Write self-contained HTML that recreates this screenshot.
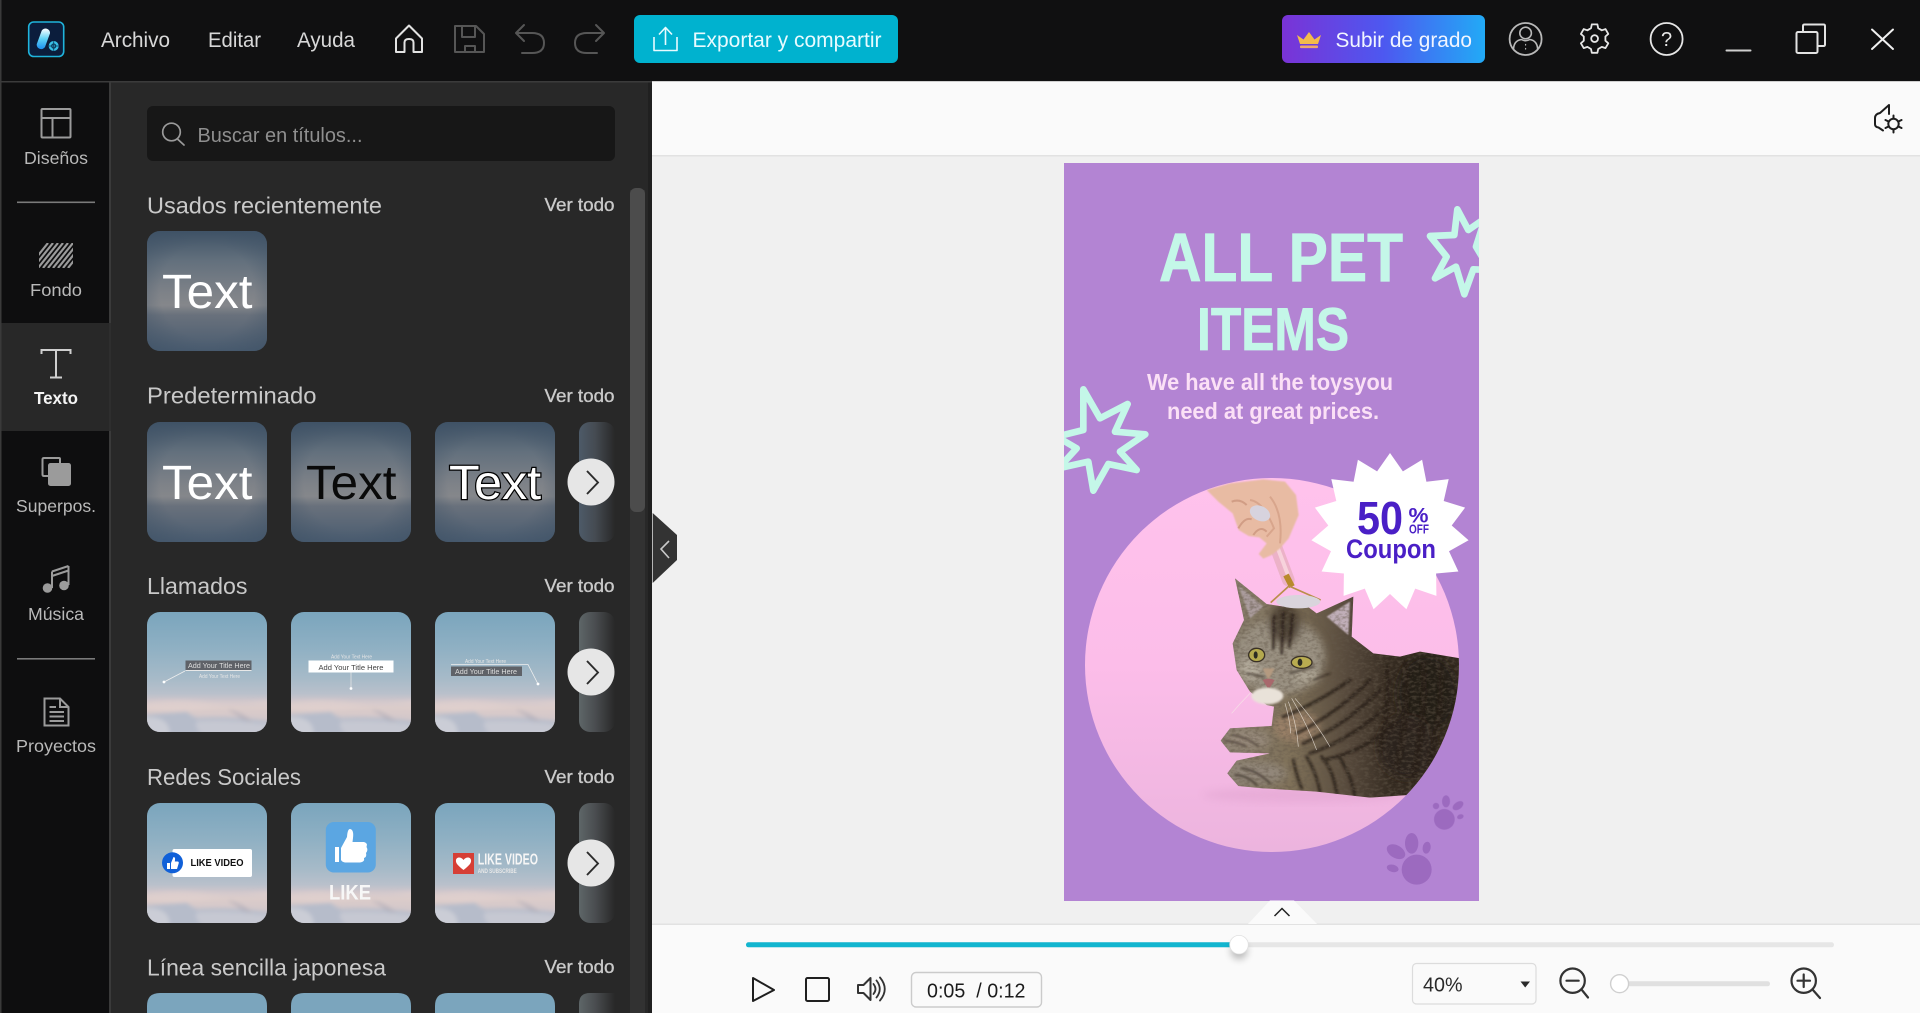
<!DOCTYPE html>
<html lang="es">
<head>
<meta charset="utf-8">
<title>Texto</title>
<style>
html,body{margin:0;padding:0;width:1920px;height:1013px;overflow:hidden;background:#f0f0f0}
svg{display:block}
text{font-family:"Liberation Sans",Arial,sans-serif}
</style>
</head>
<body>
<svg xmlns="http://www.w3.org/2000/svg" width="1920" height="1013" viewBox="0 0 1920 1013">
<defs>
  <linearGradient id="dk" x1="0" y1="0" x2="0" y2="1">
    <stop offset="0" stop-color="#3f5266"/><stop offset=".25" stop-color="#63707d"/><stop offset=".52" stop-color="#7e8288"/><stop offset=".62" stop-color="#85878b"/><stop offset=".7" stop-color="#69717c"/><stop offset="1" stop-color="#4a5c70"/>
  </linearGradient>
  <radialGradient id="vig" cx=".5" cy=".5" r=".72">
    <stop offset=".55" stop-color="#3f5266" stop-opacity="0"/><stop offset="1" stop-color="#3f5266" stop-opacity=".7"/>
  </radialGradient>
  <linearGradient id="sky" x1="0" y1="0" x2="0" y2="1">
    <stop offset="0" stop-color="#7aa5bd"/><stop offset=".3" stop-color="#8fb0c3"/><stop offset=".55" stop-color="#a6bac8"/><stop offset=".68" stop-color="#b9c0cb"/><stop offset=".74" stop-color="#cfc6cb"/><stop offset=".8" stop-color="#dbccca"/><stop offset=".9" stop-color="#d2c7ca"/><stop offset="1" stop-color="#bcc0cb"/>
  </linearGradient>
  <linearGradient id="fade" x1="0" y1="0" x2="1" y2="0">
    <stop offset="0" stop-color="#4d5a68"/><stop offset=".45" stop-color="#454b52"/><stop offset="1" stop-color="#282828"/>
  </linearGradient>
  <linearGradient id="fade2" x1="0" y1="0" x2="1" y2="0">
    <stop offset="0" stop-color="#5e6668"/><stop offset=".45" stop-color="#4a4d50"/><stop offset="1" stop-color="#282828"/>
  </linearGradient>
  <linearGradient id="up" x1="0" y1="0" x2="1" y2="0">
    <stop offset="0" stop-color="#7a33d6"/><stop offset=".5" stop-color="#4d58f0"/><stop offset="1" stop-color="#22aaf6"/>
  </linearGradient>
  <linearGradient id="pill" x1="0" y1="0" x2="0" y2="1">
    <stop offset="0" stop-color="#ffffff"/><stop offset=".5" stop-color="#5fd3f5"/><stop offset="1" stop-color="#1c8ff0"/>
  </linearGradient>
  <linearGradient id="pink" x1="0" y1="0" x2="0" y2="1">
    <stop offset="0" stop-color="#ffc2ec"/><stop offset=".5" stop-color="#fcbde9"/><stop offset="1" stop-color="#ecb4de"/>
  </linearGradient>
  <linearGradient id="catg" gradientUnits="userSpaceOnUse" x1="510" y1="0" x2="1225" y2="0">
    <stop offset="0" stop-color="#8a8071"/><stop offset=".3" stop-color="#7f7159"/><stop offset=".55" stop-color="#54473a"/><stop offset=".72" stop-color="#352b21"/><stop offset="1" stop-color="#332a20"/>
  </linearGradient>
  <clipPath id="poster"><rect x="1064" y="163" width="415" height="738"/></clipPath>
  <clipPath id="circ"><circle cx="666" cy="615" r="561"/></clipPath>
  <clipPath id="rr"><rect width="120" height="120" rx="13"/></clipPath>
  <clipPath id="catclip"><path d="M555 355 L650 432 L700 440 L760 430 L800 460 L910 410 L905 530 L970 580 L1050 590 L1110 575 L1230 595 L1230 700 L1190 850 L1140 950 L1075 1005 L960 1013 L800 995 L640 985 L565 978 L532 940 L560 902 L660 880 L540 877 L512 842 L540 805 L665 798 L672 740 L650 735 L600 695 L560 630 L548 550 L582 480Z"/></clipPath>
  <clipPath id="fondo"><rect x="39" y="243" width="34" height="25"/></clipPath>
  <filter id="b1" x="-10%" y="-10%" width="120%" height="120%"><feGaussianBlur stdDeviation="2"/></filter>
  <filter id="b15" x="-10%" y="-10%" width="120%" height="120%"><feGaussianBlur stdDeviation="3.5"/></filter>
  <filter id="b2" x="-30%" y="-30%" width="160%" height="160%"><feGaussianBlur stdDeviation="12"/></filter>
  <filter id="sh" x="-100%" y="-100%" width="300%" height="300%"><feGaussianBlur stdDeviation="4"/></filter>
  <filter id="fur" x="0" y="0" width="100%" height="100%">
    <feTurbulence type="fractalNoise" baseFrequency=".07 .13" numOctaves="3" seed="4"/>
    <feColorMatrix values="0 0 0 0 .13  0 0 0 0 .1  0 0 0 0 .07  0 0 0 3.2 -1.35"/>
  </filter>
  <symbol id="dkt" viewBox="0 0 120 120" width="120" height="120">
    <rect width="120" height="120" rx="13" fill="url(#dk)"/>
    <rect width="120" height="120" rx="13" fill="url(#vig)"/>
  </symbol>
  <symbol id="skyt" viewBox="0 0 120 120" width="120" height="120">
    <rect width="120" height="120" rx="13" fill="url(#sky)"/>
    <g clip-path="url(#rr)">
      <g filter="url(#b1)">
        <path d="M-5 103 L40 100 Q44 104 50 106 Q90 104 125 110 V125 H-5Z" fill="#b6bcca"/>
        <path d="M-5 105 Q14 104 20 112 Q24 118 22 125 H-5Z" fill="#cbcdd6"/>
        <path d="M50 109 Q85 107 125 113 V125 H60 Q46 118 50 109Z" fill="#c6c8d2"/>
        <path d="M80 97 Q95 100 106 110 L96 108 Q88 102 80 97Z" fill="#aca8b4" opacity=".6"/>
        <path d="M-5 92 Q25 86 55 90 T125 88 V94 Q90 91 60 96 T-5 96Z" fill="#e3d3d0" opacity=".55"/>
      </g>
    </g>
  </symbol>
</defs>

<!-- base -->
<rect width="1920" height="1013" fill="#f0f0f0"/>
<rect x="652" y="82" width="1268" height="73" fill="#fafafa"/>
<rect x="652" y="155" width="1268" height="1.5" fill="#e2e2e2"/>
<rect x="652" y="925" width="1268" height="88" fill="#fafafa"/>
<rect x="652" y="923.5" width="1268" height="1.5" fill="#e2e2e2"/>

<!-- header -->
<rect width="1920" height="81" fill="#101011"/>
<rect y="81" width="652" height="1.5" fill="#3b3b3b"/>
<rect y="81" x="652" width="1268" height="1" fill="#cfcfcf"/>
<rect x="0" y="0" width="1.5" height="1013" fill="#3a3a3a"/>

<!-- logo -->
<rect x="28.7" y="22" width="35" height="34.5" rx="5" fill="#0b1d3c" stroke="#1fb4dc" stroke-width="1.6"/>
<path d="M36.7 44.2 L41.7 30.6 A4.5 4.5 0 0 1 50 33.4 L45 47 A4.5 4.5 0 0 1 36.7 44.2Z" fill="url(#pill)"/>
<circle cx="53.7" cy="46" r="5" fill="#38bfe6"/>
<circle cx="53.7" cy="46" r="2" fill="none" stroke="#0b3a5c" stroke-width="1.2"/>
<path d="M49 46H58.4M53.7 41.3V50.7" stroke="#0b3a5c" stroke-width=".8"/>

<text x="101" y="47" font-size="21" fill="#d8d8d8" textLength="69" lengthAdjust="spacingAndGlyphs">Archivo</text>
<text x="208" y="47" font-size="21" fill="#d8d8d8" textLength="53" lengthAdjust="spacingAndGlyphs">Editar</text>
<text x="297" y="47" font-size="21" fill="#d8d8d8" textLength="58" lengthAdjust="spacingAndGlyphs">Ayuda</text>

<g fill="none" stroke-linejoin="round" stroke-linecap="round">
  <path d="M396 38.5 L409 25.5 L422 38.5 V52 H413.5 V42.5 Q413.5 39 409 39 Q404.5 39 404.5 42.5 V52 H396Z" stroke="#e2e2e2" stroke-width="2"/>
  <path d="M455 26 H476 L484 34 V52 H455Z M462 26 V37 H475 V26 M465 52 V46 H475 V52" stroke="#565656" stroke-width="2"/>
  <path d="M524 25 L516 33 L524 41 M516 33 H532 Q544 33 544 43 Q544 53 532 53 H522" stroke="#565656" stroke-width="2"/>
  <path d="M596 25 L604 33 L596 41 M604 33 H587 Q575 33 575 43 Q575 53 587 53 H597" stroke="#565656" stroke-width="2"/>
</g>

<!-- export -->
<rect x="634" y="15" width="264" height="48" rx="6" fill="#00b2cf"/>
<path d="M665.5 28 V45 M659 34.5 L665.5 27.5 L672 34.5 M654 37 V50.5 H677 V37" fill="none" stroke="#e8fbff" stroke-width="1.6" stroke-linejoin="round"/>
<text x="692.5" y="47" font-size="21" fill="#e8fbff" textLength="189" lengthAdjust="spacingAndGlyphs">Exportar y compartir</text>

<!-- upgrade -->
<rect x="1282" y="15" width="203" height="48" rx="6" fill="url(#up)"/>
<path d="M1297 35 L1303.5 39.5 L1309 32 L1314.5 39.5 L1321 35 L1318 44 H1300Z" fill="#f3bb4b"/>
<rect x="1300" y="45.5" width="18" height="2.6" rx="1" fill="#efa76d"/>
<text x="1335.5" y="47" font-size="21" fill="#f1f5ff" textLength="136.5" lengthAdjust="spacingAndGlyphs">Subir de grado</text>

<!-- right header icons -->
<g fill="none" stroke-linejoin="round" stroke-linecap="round">
  <circle cx="1525.6" cy="39" r="16" stroke="#b9b9b9" stroke-width="1.8"/>
  <circle cx="1525.6" cy="33" r="5.8" stroke="#b9b9b9" stroke-width="1.6"/>
  <path d="M1513.5 49 Q1514 40.5 1521.5 39.5 Q1525.6 42 1529.7 39.5 Q1537 40.5 1537.7 49" stroke="#b9b9b9" stroke-width="1.6"/>
  <path d="M1525.6 44.5v.5M1525.6 48.5v.5" stroke="#b9b9b9" stroke-width="1.2"/>
  <path transform="translate(1594.6 38.6)" d="M-3.6 -10.4 L-2.8 -14.2 H2.8 L3.6 -10.4 L7.2 -8.3 L10.9 -9.5 L13.7 -4.7 L10.8 -2.1 V2.1 L13.7 4.7 L10.9 9.5 L7.2 8.3 L3.6 10.4 L2.8 14.2 H-2.8 L-3.6 10.4 L-7.2 8.3 L-10.9 9.5 L-13.7 4.7 L-10.8 2.1 V-2.1 L-13.7 -4.7 L-10.9 -9.5 L-7.2 -8.3Z" stroke="#e6e6e6" stroke-width="1.8"/>
  <circle cx="1594.6" cy="38.6" r="3.4" stroke="#e6e6e6" stroke-width="1.8"/>
  <circle cx="1666.6" cy="39" r="16" stroke="#e6e6e6" stroke-width="1.8"/>
  <path d="M1726.5 50.5 H1750.5" stroke="#cfcfcf" stroke-width="2"/>
  <rect x="1796.5" y="32" width="21" height="21" rx="1.5" stroke="#e2e2e2" stroke-width="2"/>
  <path d="M1803 32 V26 Q1803 24.5 1804.5 24.5 H1823.5 Q1825 24.5 1825 26 V44.5 Q1825 46 1823.5 46 H1817.5" stroke="#e2e2e2" stroke-width="2"/>
  <path d="M1872 29.5 L1893 49 M1893 29.5 L1872 49" stroke="#f0f0f0" stroke-width="2"/>
</g>
<text x="1666.6" y="46" font-size="20" fill="#e6e6e6" text-anchor="middle">?</text>

<!-- right toolbar icon -->
<g fill="none" stroke="#1d1d1d" stroke-width="2" stroke-linejoin="round" stroke-linecap="round">
  <path d="M1889 105 L1880 113 Q1875 114 1875 118 V124 Q1875 127 1878.5 127.5 L1883 130.5 M1889 105 V114"/>
  <circle cx="1893.5" cy="124" r="5.2"/>
  <path d="M1893.5 115.5 V118.5 M1893.5 129.5 V132.5 M1885.5 120 L1888.5 121.5 M1898.5 126.5 L1901.5 128 M1885.5 128 L1888.5 126.5 M1898.5 121.5 L1901.5 120"/>
</g>

<!-- sidebar -->
<rect x="1.5" y="82.5" width="107.5" height="930.5" fill="#0e0e0f"/>
<rect x="109" y="82.5" width="2" height="930.5" fill="#3a3a3a"/>
<rect x="1.5" y="323" width="107.5" height="108" fill="#282828"/>
<rect x="109" y="323" width="2" height="108" fill="#2e2e2e"/>

<g fill="none" stroke="#9b9b9b" stroke-width="2">
  <rect x="41.5" y="109" width="29" height="28.5" rx="1"/>
  <path d="M41.5 118 H70.5 M52.5 118 V137.5"/>
  <g clip-path="url(#fondo)" stroke-width="2.2">
    <path d="M38 268 L58 243 M43 268 L63 243 M48 268 L68 243 M53 268 L73 243 M58 268 L78 243 M63 268 L83 243 M68 268 L88 243 M33 268 L53 243 M28 268 L48 243"/>
  </g>
  <path d="M41.5 354 V350 H70.5 V354 M56 350 V377.5 M50 377.5 H62" stroke="#cfcfcf"/>
  <path d="M48 476 H44 Q42.5 476 42.5 474.5 V459.5 Q42.5 458 44 458 H59 Q60 458 60 459 V463"/>
  <path d="M52 571.5 V588 M68.5 566 V585 M52 571.5 L68.5 566 M52 576 L68.5 570.5"/>
  <path d="M44.5 698.5 H60 L68.5 707 V725.5 H44.5Z M60 698.5 V707 H68.5 M49.5 707 H56 M49.5 712 H64 M49.5 716.5 H64 M49.5 721 H64"/>
</g>
<rect x="48" y="463" width="23" height="23" rx="2.5" fill="#9b9b9b"/>
<circle cx="47.5" cy="588" r="4.8" fill="#9b9b9b"/>
<circle cx="64" cy="585.5" r="4.8" fill="#9b9b9b"/>
<rect x="17" y="201.5" width="78" height="1.6" fill="#7a7a7a"/>
<rect x="17" y="658" width="78" height="1.6" fill="#7a7a7a"/>

<g font-size="17.5" fill="#b9b9b9">
  <text x="24" y="164" textLength="64" lengthAdjust="spacingAndGlyphs">Diseños</text>
  <text x="30" y="296" textLength="52" lengthAdjust="spacingAndGlyphs">Fondo</text>
  <text x="34" y="404" textLength="44" lengthAdjust="spacingAndGlyphs" fill="#f4f4f4" font-weight="bold">Texto</text>
  <text x="16" y="512" textLength="80" lengthAdjust="spacingAndGlyphs">Superpos.</text>
  <text x="28" y="620" textLength="56" lengthAdjust="spacingAndGlyphs">Música</text>
  <text x="16" y="752" textLength="80" lengthAdjust="spacingAndGlyphs">Proyectos</text>
</g>

<!-- panel -->
<rect x="111" y="82.5" width="541" height="930.5" fill="#282828"/>
<rect x="147" y="106" width="468" height="55" rx="6" fill="#171717"/>
<g fill="none" stroke="#9a9a9a" stroke-width="1.7" stroke-linecap="round">
  <circle cx="171.5" cy="132" r="8.8"/><path d="M178 139.5 L184 145"/>
</g>
<text x="197.5" y="142" font-size="20" fill="#8f8f8f" textLength="165" lengthAdjust="spacingAndGlyphs">Buscar en títulos...</text>

<!-- scrollbar -->
<rect x="630" y="190" width="15" height="823" fill="#323232"/>
<rect x="630" y="188" width="15" height="324" rx="6" fill="#4c4c4c"/>

<!-- headings -->
<g font-size="23" fill="#c9c9c9">
  <text x="147" y="213.5" textLength="235" lengthAdjust="spacingAndGlyphs">Usados recientemente</text>
  <text x="147" y="403.5" textLength="169.5" lengthAdjust="spacingAndGlyphs">Predeterminado</text>
  <text x="147" y="594" textLength="100.5" lengthAdjust="spacingAndGlyphs">Llamados</text>
  <text x="147" y="785" textLength="154" lengthAdjust="spacingAndGlyphs">Redes Sociales</text>
  <text x="147" y="975.5" textLength="239" lengthAdjust="spacingAndGlyphs">Línea sencilla japonesa</text>
</g>
<g font-size="18" fill="#c9c9c9" stroke="#c9c9c9" stroke-width=".35">
  <text x="544.5" y="211" textLength="70" lengthAdjust="spacingAndGlyphs">Ver todo</text>
  <text x="544.5" y="402" textLength="70" lengthAdjust="spacingAndGlyphs">Ver todo</text>
  <text x="544.5" y="592" textLength="70" lengthAdjust="spacingAndGlyphs">Ver todo</text>
  <text x="544.5" y="783" textLength="70" lengthAdjust="spacingAndGlyphs">Ver todo</text>
  <text x="544.5" y="973" textLength="70" lengthAdjust="spacingAndGlyphs">Ver todo</text>
</g>

<!-- row 1 -->
<use href="#dkt" x="147" y="231"/>
<text x="162" y="308" font-size="48" fill="#fff" textLength="90.5" lengthAdjust="spacingAndGlyphs">Text</text>

<!-- row 2 -->
<use href="#dkt" x="147" y="422"/>
<use href="#dkt" x="291" y="422"/>
<use href="#dkt" x="435" y="422"/>
<rect x="579" y="422" width="36" height="120" rx="11" fill="url(#fade)"/>
<text x="162" y="499" font-size="48" fill="#fff" textLength="90.5" lengthAdjust="spacingAndGlyphs">Text</text>
<text x="306" y="499" font-size="48" fill="#0a0a0a" textLength="90.5" lengthAdjust="spacingAndGlyphs">Text</text>
<text x="449" y="499" font-size="48" fill="#fff" stroke="#000" stroke-width="2.4" paint-order="stroke" textLength="92" lengthAdjust="spacingAndGlyphs">Text</text>

<!-- row 3 -->
<use href="#skyt" x="147" y="612"/>
<use href="#skyt" x="291" y="612"/>
<use href="#skyt" x="435" y="612"/>
<rect x="579" y="612" width="36" height="120" rx="11" fill="url(#fade2)"/>
<g>
  <rect x="185.5" y="660.5" width="66" height="9.5" fill="#5f6268"/>
  <rect x="185.5" y="670" width="66" height="1" fill="#e8e8e8"/>
  <text x="188" y="668" font-size="7" fill="#dcdcdc" textLength="62" lengthAdjust="spacingAndGlyphs">Add Your Title Here</text>
  <text x="199" y="678" font-size="5" fill="#e6e6e6" textLength="41" lengthAdjust="spacingAndGlyphs">Add Your Text Here</text>
  <path d="M185 671 L164 682" stroke="#eee" stroke-width=".8"/>
  <circle cx="164" cy="682" r="1.4" fill="#fff"/>

  <text x="331" y="658.5" font-size="5" fill="#e6e6e6" textLength="41" lengthAdjust="spacingAndGlyphs">Add Your Text Here</text>
  <rect x="308.5" y="660.5" width="85" height="12" fill="#fff"/>
  <text x="318.5" y="670" font-size="7.5" fill="#444" textLength="65" lengthAdjust="spacingAndGlyphs">Add Your Title Here</text>
  <path d="M351 672.5 V688" stroke="#e4e4e4" stroke-width=".8"/>
  <circle cx="351" cy="688.5" r="1.4" fill="#fff"/>

  <text x="465" y="663" font-size="5" fill="#e6e6e6" textLength="41" lengthAdjust="spacingAndGlyphs">Add Your Text Here</text>
  <path d="M451 664.5 H528 L538 684" fill="none" stroke="#eee" stroke-width=".8"/>
  <circle cx="538" cy="684" r="1.4" fill="#fff"/>
  <rect x="451" y="666.5" width="71" height="9.5" fill="#5f6268"/>
  <text x="455" y="674" font-size="7" fill="#dcdcdc" textLength="62" lengthAdjust="spacingAndGlyphs">Add Your Title Here</text>
</g>

<!-- row 4 -->
<use href="#skyt" x="147" y="803"/>
<use href="#skyt" x="291" y="803"/>
<use href="#skyt" x="435" y="803"/>
<rect x="579" y="803" width="36" height="120" rx="11" fill="url(#fade2)"/>
<rect x="172.5" y="849" width="79.5" height="28" rx="2" fill="#fff"/>
<circle cx="172.5" cy="862.8" r="10.5" fill="#1060d8"/>
<path d="M167 863 H170 V869 H167Z M171 863 L173.5 857 Q175.5 857 175 860 L174.8 861.5 H178 Q179.3 862 178.5 864 L177 869 H171Z" fill="#fff"/>
<text x="190.5" y="866" font-size="10" font-weight="bold" fill="#111" textLength="53" lengthAdjust="spacingAndGlyphs">LIKE VIDEO</text>

<rect x="325.8" y="822" width="50" height="50.5" rx="8" fill="#5ba6e2"/>
<path d="M335 847 H339 V862 H335Z M341 848 L347 837 Q347.5 829 350 829 Q354 829.5 353 838 L352.5 842 H364 Q368 843 366.5 847 Q368.5 850 366 853 Q367 857 364 858 Q365 862 360 862.5 H345 Q342 862 341 860Z" fill="#fff"/>
<text x="329" y="899.5" font-size="21" font-weight="bold" fill="#f7f7f7" textLength="42" lengthAdjust="spacingAndGlyphs">LIKE</text>

<rect x="453" y="853" width="21" height="21" fill="#d63f36"/>
<path d="M463.5 870 C457 865 455.5 862.5 456 860 C456.5 857 461 856.5 463.5 860 C466 856.5 470.5 857 471 860 C471.5 862.5 470 865 463.5 870Z" fill="#fff"/>
<text x="477.7" y="864.5" font-size="16" font-weight="bold" fill="#f6f6f6" textLength="60.3" lengthAdjust="spacingAndGlyphs">LIKE VIDEO</text>
<text x="477.7" y="872.8" font-size="6.5" font-weight="bold" fill="#e8e8e8" textLength="39" lengthAdjust="spacingAndGlyphs">AND SUBSCRIBE</text>

<!-- row 5 (cut by window) -->
<path d="M147 1013 V1006 Q147 993 160 993 H254 Q267 993 267 1006 V1013Z" fill="#7ba5bd"/>
<path d="M291 1013 V1006 Q291 993 304 993 H398 Q411 993 411 1006 V1013Z" fill="#7ba5bd"/>
<path d="M435 1013 V1006 Q435 993 448 993 H542 Q555 993 555 1006 V1013Z" fill="#7ba5bd"/>
<path d="M579 1013 V1004 Q579 993 590 993 H615 V1013Z" fill="url(#fade2)"/>

<!-- next buttons -->
<g fill="#e6e6e6">
  <circle cx="591" cy="482" r="23.5"/>
  <circle cx="591" cy="672" r="23.5"/>
  <circle cx="591" cy="863" r="23.5"/>
</g>
<g fill="none" stroke="#2b2b2b" stroke-width="1.9">
  <path d="M587 471 L598 482.5 L587 494"/>
  <path d="M587 661 L598 672.5 L587 684"/>
  <path d="M587 852 L598 863.5 L587 875"/>
</g>

<!-- collapse handle -->
<rect x="648" y="82.5" width="4" height="930.5" fill="#202020"/>
<path d="M652.7 513 L677 535 V560 L652.7 583Z" fill="#333"/>
<path d="M669 541 L661 549 L669 558" fill="none" stroke="#c9c9c9" stroke-width="1.6"/>

<!-- POSTER -->
<rect x="1064" y="163" width="415" height="738" fill="#b384d3"/>
<g clip-path="url(#poster)">
  <g transform="translate(1050 150) scale(.33333)" fill="none" stroke="#c4f7e8" stroke-width="20" stroke-linejoin="round">
    <path d="M1222 178 L1255 240 L1305 205 L1278 290 L1320 360 L1270 358 L1243 433 L1218 350 L1155 385 L1190 320 L1140 258 L1213 255Z"/>
    <path d="M100 718 L150 805 L233 762 L195 845 L286 853 L210 905 L260 960 L175 942 L130 1022 L115 935 L25 955 L80 895 L20 860 L100 840Z"/>
  </g>

  <!-- circle + cat (zoom coordinates) -->
  <g transform="translate(1050 460) scale(.33333)">
    <circle cx="666" cy="615" r="561" fill="url(#pink)"/>
    <g clip-path="url(#circ)">
      <ellipse cx="760" cy="1005" rx="300" ry="22" fill="#dea0cc" opacity=".45" filter="url(#b2)"/>
      <!-- roller handle -->
      <path d="M640 170 L662 215" stroke="#c99a58" stroke-width="14"/>
      <path d="M668 235 L715 360" stroke="#ecb2c8" stroke-width="38" stroke-linecap="round"/>
      <path d="M676 245 L712 340" stroke="#f7d2dc" stroke-width="12" stroke-linecap="round"/>
      <path d="M708 345 L726 380" stroke="#b98a2c" stroke-width="18"/>
      <path d="M717 378 L662 428 M717 378 L812 420" stroke="#b98f4a" stroke-width="5" fill="none"/>
      <!-- hand -->
      <path d="M470 90 L540 70 L640 58 L705 65 L738 105 L746 165 L716 235 L690 265 L665 285 L640 296 L626 282 L650 250 L628 232 L596 228 L566 210 L548 160 L505 125Z" fill="#e8bba3" filter="url(#b1)"/>
      <path d="M600 120 Q640 125 672 205 L650 230 M660 110 Q700 160 690 250" stroke="#cf9a80" stroke-width="6" fill="none" opacity=".65"/>
      <path d="M545 125 Q570 115 590 135 M565 205 Q585 170 605 178 M610 225 Q630 195 650 215" stroke="#c89078" stroke-width="6" fill="none" opacity=".7"/>
      <ellipse cx="630" cy="160" rx="32" ry="22" fill="#d7d3de" transform="rotate(25 630 160)"/>

      <!-- cat -->
      <g clip-path="url(#catclip)">
        <rect x="500" y="340" width="740" height="690" fill="url(#catg)"/>
        <g filter="url(#b2)">
          <ellipse cx="690" cy="590" rx="135" ry="115" fill="#9a9182"/>
          <ellipse cx="1130" cy="700" rx="90" ry="115" fill="#241d15" opacity=".95"/>
          <ellipse cx="1070" cy="860" rx="85" ry="95" fill="#2c241b" opacity=".95"/>
          <ellipse cx="740" cy="800" rx="70" ry="45" fill="#a0846a" opacity=".8"/>
          <ellipse cx="590" cy="840" rx="70" ry="30" fill="#96897a"/>
          <ellipse cx="620" cy="940" rx="90" ry="32" fill="#92877a"/>
          <ellipse cx="600" cy="630" rx="32" ry="30" fill="#b5ad9e"/>
          <ellipse cx="770" cy="650" rx="40" ry="22" fill="#ada594"/>
        </g>
        <path d="M565 375 L640 440 L600 475Z" fill="#aa9c9c" filter="url(#b1)"/>
        <path d="M900 425 L895 525 L830 470Z" fill="#c0aeb8" filter="url(#b1)"/>
        <ellipse cx="705" cy="490" rx="46" ry="60" fill="#3c3228" filter="url(#b2)" opacity=".8"/>
        <g stroke="#251e16" fill="none" stroke-linecap="round" opacity=".75" filter="url(#b15)">
          <path d="M672 470 L670 565 M700 460 L695 580 M728 465 L718 560" stroke-width="9"/>
          <path d="M740 820 Q860 760 960 660 M760 850 Q880 800 990 690 M780 880 Q900 840 1010 740 M700 770 Q800 730 900 660 M820 900 Q930 880 1040 790" stroke-width="11"/>
          <path d="M1010 620 Q1020 750 990 870 M1065 610 Q1080 760 1040 920 M1120 610 Q1130 760 1090 950 M1170 620 Q1180 760 1140 900" stroke-width="14"/>
          <path d="M730 900 Q740 950 755 985 M770 890 Q800 940 810 995 M815 890 Q850 930 860 1000 M870 895 Q900 940 915 1005" stroke-width="10"/>
          <path d="M525 842 Q560 845 590 860 M545 825 Q590 830 625 860" stroke-width="4"/>
          <path d="M555 945 Q590 945 620 975 M575 925 Q620 930 660 970" stroke-width="5"/>
          <path d="M590 640 L640 650 M720 640 L790 620 M790 660 L840 640" stroke-width="5"/>
        </g>
        <rect x="500" y="340" width="740" height="690" filter="url(#fur)" opacity=".45"/>
      </g>
      <!-- roller stone on top of the head -->
      <ellipse cx="745" cy="425" rx="66" ry="20" fill="#d9d4dc"/>
      <!-- muzzle -->
      <ellipse cx="652" cy="708" rx="48" ry="25" fill="#e9e2d9" filter="url(#b15)"/>
      <path d="M638 625 L655 660 L674 625Z" fill="#b49a80" filter="url(#b1)"/>
      <!-- eyes -->
      <ellipse cx="620" cy="585" rx="24" ry="20" fill="#b4a94e" stroke="#3a3126" stroke-width="4"/>
      <ellipse cx="755" cy="607" rx="31" ry="18" fill="#b9ac50" stroke="#3a3126" stroke-width="4"/>
      <ellipse cx="617" cy="585" rx="6" ry="11" fill="#2b2b22"/>
      <ellipse cx="750" cy="607" rx="7" ry="11" fill="#2b2b22"/>
      <!-- nose -->
      <path d="M638 660 Q655 652 674 660 L660 682 L652 682Z" fill="#a8686c"/>
      <!-- whiskers -->
      <g stroke="#f4ede6" stroke-width="2" fill="none" opacity=".75">
        <path d="M725 715 Q770 790 800 870 M715 725 Q740 790 745 860 M705 730 Q720 780 722 820 M735 715 Q800 790 840 860 M600 700 Q570 730 545 760"/>
      </g>
    </g>
    <!-- paws -->
    <g fill="#9c6abf">
      <circle cx="1100" cy="1229" r="45"/>
      <ellipse cx="1085" cy="1150" rx="20" ry="31"/>
      <ellipse cx="1038" cy="1175" rx="30" ry="19" transform="rotate(30 1038 1175)"/>
      <ellipse cx="1130" cy="1163" rx="12" ry="18" transform="rotate(10 1130 1163)"/>
      <ellipse cx="1028" cy="1225" rx="18" ry="11" transform="rotate(15 1028 1225)"/>
      <circle cx="1183" cy="1078" r="31"/>
      <ellipse cx="1188" cy="1024" rx="12" ry="18"/>
      <circle cx="1158" cy="1038" r="9.5"/>
      <ellipse cx="1224" cy="1037" rx="18" ry="11" transform="rotate(-35 1224 1037)"/>
      <ellipse cx="1231" cy="1070" rx="10" ry="7" transform="rotate(-20 1231 1070)"/>
    </g>
  </g>

  <!-- coupon burst -->
  <polygon fill="#fff" points="1390,453 1402.9,471.4 1422.1,459.8 1426.4,481.8 1448.7,479.1 1443.7,501 1465.1,507.6 1451.7,525.5 1468.6,540.3 1449,551.2 1458.4,571.5 1436.1,573.5 1436.4,595.9 1415.2,588.6 1406.4,609.3 1390,594 1373.6,609.3 1364.8,588.6 1343.6,595.9 1343.9,573.5 1321.6,571.5 1331,551.2 1311.4,540.3 1328.3,525.5 1314.9,507.6 1336.3,501 1331.3,479.1 1353.6,481.8 1357.9,459.8 1377.1,471.4"/>
  <g fill="#4a1fc6" font-weight="bold">
    <text x="1357" y="534" font-size="46" textLength="46" lengthAdjust="spacingAndGlyphs">50</text>
    <text x="1408.5" y="522.5" font-size="21" textLength="20" lengthAdjust="spacingAndGlyphs">%</text>
    <text x="1409" y="533.5" font-size="13" textLength="20" lengthAdjust="spacingAndGlyphs">OFF</text>
    <text x="1346" y="558" font-size="27" textLength="90" lengthAdjust="spacingAndGlyphs">Coupon</text>
  </g>

  <!-- poster headings -->
  <g font-weight="bold" stroke-width=".8">
    <text x="1159" y="281" font-size="69" fill="#c4f7e8" stroke="#c4f7e8" textLength="244" lengthAdjust="spacingAndGlyphs">ALL PET</text>
    <text x="1197" y="350" font-size="60" fill="#c4f7e8" stroke="#c4f7e8" textLength="152" lengthAdjust="spacingAndGlyphs">ITEMS</text>
    <text x="1147" y="390" font-size="23" fill="#fbe0f6" textLength="246" lengthAdjust="spacingAndGlyphs">We have all the toysyou</text>
    <text x="1167" y="419" font-size="23" fill="#fbe0f6" textLength="212" lengthAdjust="spacingAndGlyphs">need at great prices.</text>
  </g>
</g>

<!-- expand tab -->
<path d="M1248 924 L1270 900.5 H1294 L1317 924Z" fill="#fafafa"/>
<path d="M1274.5 916 L1282 908.5 L1289.5 916" fill="none" stroke="#222" stroke-width="1.5"/>

<!-- timeline -->
<rect x="746" y="942.3" width="1088" height="5" rx="2.5" fill="#e6e6e6"/>
<rect x="746" y="942.3" width="493" height="5" rx="2.5" fill="#12b5cf"/>
<circle cx="1239" cy="951" r="8" fill="#000" opacity=".28" filter="url(#sh)"/>
<circle cx="1239" cy="944.7" r="9.3" fill="#fff" stroke="#e0e0e0" stroke-width=".8"/>

<!-- transport -->
<g fill="none" stroke="#1f1f1f" stroke-width="2" stroke-linejoin="round" stroke-linecap="round">
  <path d="M753 978 L774 990 L753 1001Z"/>
  <rect x="806" y="978" width="23" height="23" rx="1.5"/>
  <path d="M858 985 H863.5 L870.5 978 V1000 L863.5 993 H858Z" stroke="#333"/>
  <path d="M873.5 984 Q877.5 989 873.5 994 M876.5 980.5 Q883 989 876.5 997.5 M880 977.5 Q889.5 989 880 1000.5" stroke="#333" stroke-width="1.8"/>
</g>
<rect x="911.5" y="972.5" width="130" height="34.5" rx="4.5" fill="#fafafa" stroke="#cbcbcb" stroke-width="1.4"/>
<text x="927" y="997.5" font-size="20" fill="#1b1b1b" textLength="98.5" lengthAdjust="spacingAndGlyphs" xml:space="preserve">0:05  / 0:12</text>

<!-- zoom control -->
<rect x="1412.5" y="963.5" width="123.5" height="40.5" rx="4" fill="#fafafa" stroke="#dcdcdc" stroke-width="1.2"/>
<text x="1423" y="991.5" font-size="20" fill="#2a2a2a" textLength="39.5" lengthAdjust="spacingAndGlyphs">40%</text>
<path d="M1520.5 981.5 H1530 L1525.2 987.5Z" fill="#2a2a2a"/>
<g fill="none" stroke="#333" stroke-width="2.2" stroke-linecap="round">
  <circle cx="1572.6" cy="980.7" r="12.2"/>
  <path d="M1566.5 980.7 H1578.7 M1581.5 989.5 L1588 997.5"/>
  <circle cx="1803.7" cy="980.7" r="12.2"/>
  <path d="M1797.5 980.7 H1810 M1803.7 974.5 V987 M1812.5 989.5 L1820 998"/>
</g>
<rect x="1619" y="981.3" width="151" height="5" rx="2.5" fill="#e0e0e0"/>
<circle cx="1619.6" cy="983.7" r="9" fill="#fff" stroke="#cfcfcf" stroke-width="1.4"/>
</svg>
</body>
</html>
